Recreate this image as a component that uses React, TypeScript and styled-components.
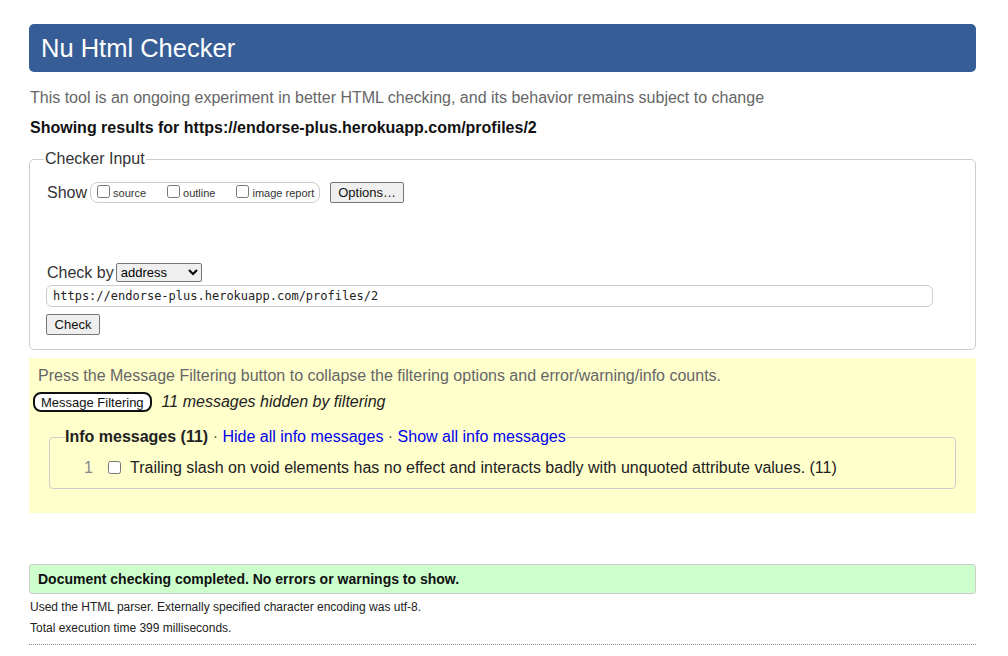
import styled, { createGlobalStyle } from "styled-components"

const Global = createGlobalStyle`
body {
  margin: 0;
  background: #fff;
  font-family: "Liberation Sans", Arial, sans-serif;
  color: #222;
}
`;

const App = () => {
  return (
    <Page>
      <Global />
      <Banner>Nu Html Checker</Banner>
      <Intro>This tool is an ongoing experiment in better HTML checking, and its behavior remains subject to change</Intro>
      <Results>Showing results for https://endorse-plus.herokuapp.com/profiles/2</Results>

      <InputSet>
        <Legend>Checker Input</Legend>
        <ShowRow>
          <Label>Show</Label>
          <Toggles>
            <Toggle><input type="checkbox" />source</Toggle>
            <Toggle><input type="checkbox" />outline</Toggle>
            <Toggle><input type="checkbox" />image report</Toggle>
          </Toggles>
          <Btn>Options…</Btn>
        </ShowRow>

        <CheckByRow>
          <Label>Check by</Label>
          <Select defaultValue="address">
            <option value="address">address</option>
          </Select>
        </CheckByRow>
        <UrlInput defaultValue="https://endorse-plus.herokuapp.com/profiles/2" />
        <SubmitBtn>Check</SubmitBtn>
      </InputSet>

      <Filters>
        <FilterNote>Press the Message Filtering button to collapse the filtering options and error/warning/info counts.</FilterNote>
        <FilterRow>
          <FilterBtn>Message Filtering</FilterBtn>
          <Hidden>11 messages hidden by filtering</Hidden>
        </FilterRow>
        <InfoSet>
          <InfoLegend>
            Info messages (11) <Dot>·</Dot> <Link>Hide all info messages</Link> <Dot>·</Dot> <Link>Show all info messages</Link>
          </InfoLegend>
          <MsgRow>
            <Num>1</Num>
            <input type="checkbox" />
            <MsgText>Trailing slash on void elements has no effect and interacts badly with unquoted attribute values. (11)</MsgText>
          </MsgRow>
        </InfoSet>
      </Filters>

      <Success>Document checking completed. No errors or warnings to show.</Success>
      <Small>Used the HTML parser. Externally specified character encoding was utf-8.</Small>
      <Small>Total execution time 399 milliseconds.</Small>
      <Rule />
    </Page>
  )
}

export default App;

const Page = styled.div`
margin: 0 32px 0 29px;
padding-top: 24px;
`;

const Banner = styled.h1`
margin: 0;
height: 48px;
box-sizing: border-box;
padding: 9px 12px 0;
background: #375d96;
border-radius: 5px;
color: #fff;
font-size: 25.5px;
font-weight: 400;
line-height: 30px;
`;

const Intro = styled.p`
margin: 16px 0 0 1px;
color: #666;
font-size: 16px;
line-height: 20px;
`;

const Results = styled.p`
margin: 10px 0 0 1px;
font-size: 16px;
font-weight: 700;
line-height: 20px;
color: #111;
`;

const InputSet = styled.fieldset`
margin: 12px 0 0;
padding: 4px 16px 14px;
border: 1px solid #ccc;
border-radius: 5px;
`;

const Legend = styled.legend`
padding: 0 1px;
margin-left: -2px;
font-size: 16px;
color: #333;
`;

const ShowRow = styled.div`
display: flex;
align-items: center;
margin-top: 10px;
`;

const Label = styled.span`
font-size: 16px;
color: #333;
margin: 0 3px 0 1px;
`;

const Toggles = styled.span`
display: inline-flex;
align-items: center;
gap: 17px;
height: 19px;
padding: 0 5px 0 2px;
border: 1px solid #ccc;
border-radius: 8px;
`;

const Toggle = styled.label`
display: inline-flex;
align-items: center;
font-size: 11px;
color: #333;
input {
  margin: -3px 3px 0 4px;
  width: 13px;
  height: 13px;
}
`;

const Btn = styled.button`
font-family: "Liberation Sans", Arial, sans-serif;
font-size: 13px;
color: #111;
height: 21px;
padding: 0 7px;
margin-left: 10px;
background: #efefef;
border: 1px solid #767676;
border-radius: 2px;
`;

const SubmitBtn = styled(Btn)`
display: block;
margin: 7px 0 0;
height: 21px;
width: 54px;
`;

const CheckByRow = styled.div`
display: flex;
align-items: center;
margin-top: 60px;
`;

const Select = styled.select`
font-family: "Liberation Sans", Arial, sans-serif;
font-size: 13px;
height: 19px;
width: 86px;
border: 1px solid #767676;
border-radius: 2px;
margin-left: -1px;
`;

const UrlInput = styled.input`
display: block;
box-sizing: border-box;
width: 887px;
height: 22px;
margin-top: 3px;
padding: 0 6px;
border: 1px solid #ccc;
border-radius: 6px;
font-family: "DejaVu Sans Mono", "Liberation Mono", monospace;
font-size: 12px;
color: #222;
`;

const Filters = styled.div`
margin-top: 8px;
background: #ffffcc;
box-sizing: border-box;
padding: 8px 9px 24px 4px;
`;

const FilterNote = styled.p`
margin: 0 0 0 5px;
color: #666;
font-size: 16px;
line-height: 20px;
`;

const FilterRow = styled.div`
display: flex;
align-items: center;
gap: 10px;
margin-top: 6px;
`;

const FilterBtn = styled.button`
font-family: "Liberation Sans", Arial, sans-serif;
font-size: 13px;
color: #111;
height: 20px;
padding: 0 6px;
background: #fff;
border: 2px solid #111;
border-radius: 8px;
`;

const Hidden = styled.em`
font-size: 16px;
color: #222;
`;

const InfoSet = styled.fieldset`
margin: 16px 11px 0 16px;
padding: 13px 15px 11px;
border: 1px solid #ccc;
border-radius: 4px;
`;

const InfoLegend = styled.legend`
padding: 0 1px 0 0;
font-size: 16px;
font-weight: 700;
color: #222;
`;

const Dot = styled.span`
font-weight: 400;
color: #555;
`;

const Link = styled.a`
font-weight: 400;
color: #0000ee;
`;

const MsgRow = styled.div`
display: flex;
align-items: center;
font-size: 16px;
line-height: 18px;
input {
  margin: -2px 9px 0 0;
  width: 13px;
  height: 13px;
}
`;

const Num = styled.span`
width: 28px;
margin-right: 15px;
text-align: right;
color: #888;
`;

const MsgText = styled.span`
color: #222;
`;

const Success = styled.p`
margin: 51px 0 0;
padding: 6px 8px;
background: #ccffcc;
border: 1px solid #ccc;
border-radius: 3px;
font-size: 14px;
font-weight: 700;
line-height: 16px;
color: #111;
`;

const Small = styled.p`
margin: 6px 0 0 1px;
font-size: 12px;
line-height: 15px;
color: #222;
`;

const Rule = styled.hr`
margin: 8px 0 0;
border: none;
border-top: 1px dotted #888;
`;
